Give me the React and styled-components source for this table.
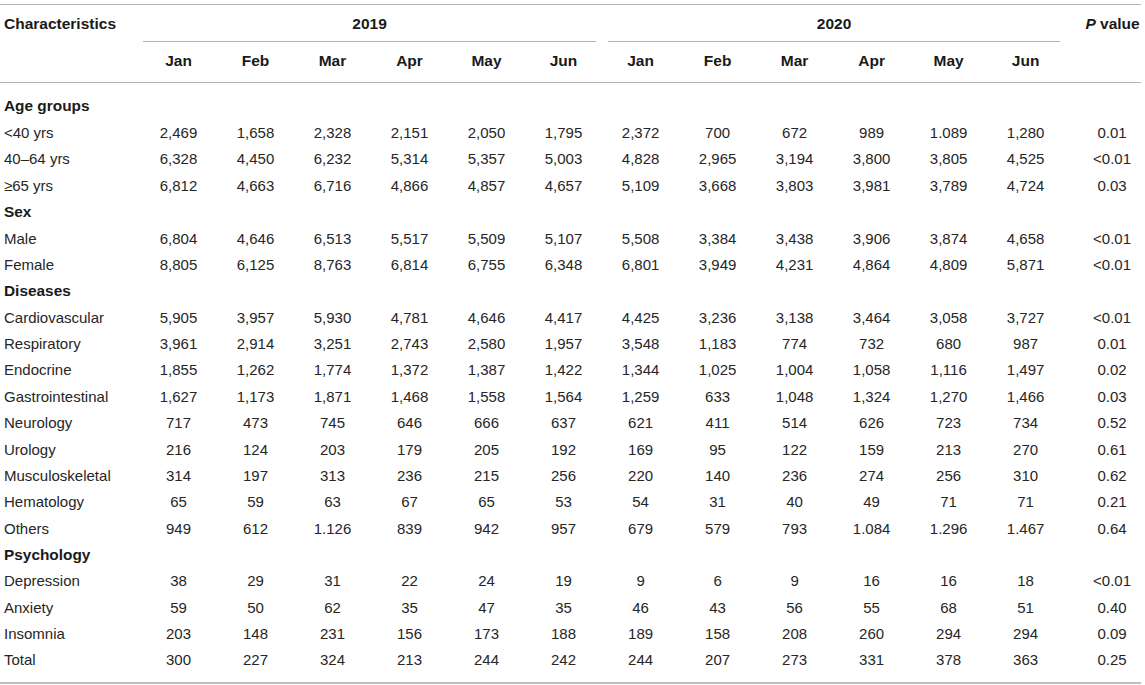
import React from "react";
import styled, { createGlobalStyle } from "styled-components";

const GlobalStyle = createGlobalStyle`
  html, body {
    margin: 0;
    padding: 0;
    background: #ffffff;
  }
  body {
    font-family: "Liberation Sans", Arial, Helvetica, sans-serif;
    color: #262626;
  }
`;

const Page = styled.div`
  width: 1145px;
  height: 685px;
  padding-top: 4px;
  box-sizing: border-box;
  overflow: hidden;
`;

const Table = styled.table`
  width: 1141px;
  table-layout: fixed;
  border-collapse: collapse;
  font-size: 15px;
  border-top: 1px solid #b4b4b4;
  border-bottom: 2px solid #bdbdbd;
`;

const HeadCell = styled.th`
  font-weight: 700;
  font-size: 15.5px;
  color: #1a1a1a;
  padding: 0 4px;
  text-align: ${(p) => p.$align || "center"};
  white-space: nowrap;
`;

const YearCell = styled.th`
  padding: 0;
  vertical-align: top;
`;

const YearLine = styled.div`
  box-sizing: border-box;
  height: 37px;
  padding-top: 10px;
  margin: 0 ${(p) => p.$right}px 0 ${(p) => p.$left}px;
  border-bottom: 1px solid #b4b4b4;
  font-weight: 700;
  font-size: 15.5px;
  color: #1a1a1a;
  text-align: center;
`;

const TopRow = styled.tr`
  height: 37px;
`;

const MonthRow = styled.tr`
  height: 40px;
  border-bottom: 1px solid #b4b4b4;
  th {
    padding-bottom: 2px;
  }
`;

const Row = styled.tr`
  height: ${(p) => 26.38 + (p.$pt || 0) + (p.$pb || 0)}px;
  td {
    padding-top: ${(p) => p.$pt || 0}px;
    padding-bottom: ${(p) => p.$pb || 0}px;
  }
`;

const Label = styled.td`
  padding-left: 4px;
  padding-right: 4px;
  text-align: left;
  white-space: nowrap;
  font-weight: ${(p) => (p.$group ? 700 : 400)};
  font-size: ${(p) => (p.$group ? "15.4px" : "15px")};
  color: ${(p) => (p.$group ? "#1a1a1a" : "#262626")};
`;

const Num = styled.td`
  padding-left: 4px;
  padding-right: 4px;
  text-align: center;
  white-space: nowrap;
`;

const PCell = styled.td`
  padding-left: 20px;
  text-align: center;
  white-space: nowrap;
`;

const months = ["Jan", "Feb", "Mar", "Apr", "May", "Jun"];

const rows = [
  { group: "Age groups" },
  { label: "<40 yrs", v: "2,469 1,658 2,328 2,151 2,050 1,795 2,372 700 672 989 1.089 1,280", p: "0.01" },
  { label: "40–64 yrs", v: "6,328 4,450 6,232 5,314 5,357 5,003 4,828 2,965 3,194 3,800 3,805 4,525", p: "<0.01" },
  { label: "≥65 yrs", v: "6,812 4,663 6,716 4,866 4,857 4,657 5,109 3,668 3,803 3,981 3,789 4,724", p: "0.03" },
  { group: "Sex" },
  { label: "Male", v: "6,804 4,646 6,513 5,517 5,509 5,107 5,508 3,384 3,438 3,906 3,874 4,658", p: "<0.01" },
  { label: "Female", v: "8,805 6,125 8,763 6,814 6,755 6,348 6,801 3,949 4,231 4,864 4,809 5,871", p: "<0.01" },
  { group: "Diseases" },
  { label: "Cardiovascular", v: "5,905 3,957 5,930 4,781 4,646 4,417 4,425 3,236 3,138 3,464 3,058 3,727", p: "<0.01" },
  { label: "Respiratory", v: "3,961 2,914 3,251 2,743 2,580 1,957 3,548 1,183 774 732 680 987", p: "0.01" },
  { label: "Endocrine", v: "1,855 1,262 1,774 1,372 1,387 1,422 1,344 1,025 1,004 1,058 1,116 1,497", p: "0.02" },
  { label: "Gastrointestinal", v: "1,627 1,173 1,871 1,468 1,558 1,564 1,259 633 1,048 1,324 1,270 1,466", p: "0.03" },
  { label: "Neurology", v: "717 473 745 646 666 637 621 411 514 626 723 734", p: "0.52" },
  { label: "Urology", v: "216 124 203 179 205 192 169 95 122 159 213 270", p: "0.61" },
  { label: "Musculoskeletal", v: "314 197 313 236 215 256 220 140 236 274 256 310", p: "0.62" },
  { label: "Hematology", v: "65 59 63 67 65 53 54 31 40 49 71 71", p: "0.21" },
  { label: "Others", v: "949 612 1.126 839 942 957 679 579 793 1.084 1.296 1.467", p: "0.64" },
  { group: "Psychology" },
  { label: "Depression", v: "38 29 31 22 24 19 9 6 9 16 16 18", p: "<0.01" },
  { label: "Anxiety", v: "59 50 62 35 47 35 46 43 56 55 68 51", p: "0.40" },
  { label: "Insomnia", v: "203 148 231 156 173 188 189 158 208 260 294 294", p: "0.09" },
  { label: "Total", v: "300 227 324 213 244 242 244 207 273 331 378 363", p: "0.25" },
];

export default function App() {
  const last = rows.length - 1;
  return (
    <Page>
      <GlobalStyle />
      <Table>
        <colgroup>
          <col style={{ width: 140 }} />
          {Array.from({ length: 12 }).map((_, i) => (
            <col key={i} style={{ width: 77 }} />
          ))}
          <col />
        </colgroup>
        <thead>
          <TopRow>
            <HeadCell $align="left">Characteristics</HeadCell>
            <YearCell colSpan={6}>
              <YearLine $left={3} $right={6}>2019</YearLine>
            </YearCell>
            <YearCell colSpan={6}>
              <YearLine $left={6} $right={4}>2020</YearLine>
            </YearCell>
            <HeadCell style={{ paddingLeft: 20, paddingRight: 0 }}>
              <i>P</i> value
            </HeadCell>
          </TopRow>
          <MonthRow>
            <HeadCell />
            {[...months, ...months].map((m, i) => (
              <HeadCell key={i}>{m}</HeadCell>
            ))}
            <HeadCell />
          </MonthRow>
        </thead>
        <tbody>
          {rows.map((r, i) => {
            const pt = i === 0 ? 11 : 0;
            const pb = i === last ? 10 : 0;
            return r.group ? (
              <Row key={i} $pt={pt} $pb={pb}>
                <Label $group colSpan={14}>
                  {r.group}
                </Label>
              </Row>
            ) : (
              <Row key={i} $pt={pt} $pb={pb}>
                <Label>{r.label}</Label>
                {r.v.split(" ").map((n, j) => (
                  <Num key={j}>{n}</Num>
                ))}
                <PCell>{r.p}</PCell>
              </Row>
            );
          })}
        </tbody>
      </Table>
    </Page>
  );
}
